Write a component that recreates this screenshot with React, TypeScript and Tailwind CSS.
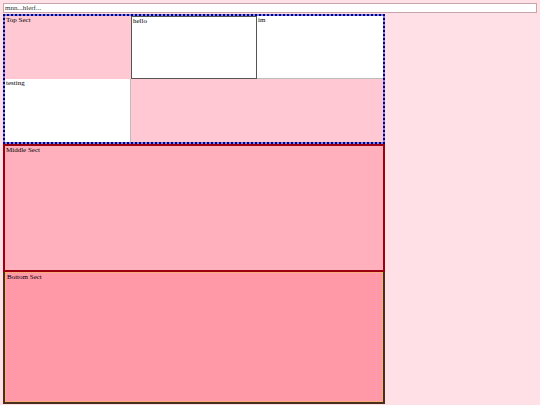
import React from "react";

export default function App() {
  return (
    <div className="min-h-[405px] w-[540px] bg-[#ffe0e6] pt-[3px] pl-[3px] font-['Liberation_Serif',serif] text-[7px] leading-[8px] text-black">
      <div className="flex h-[10px] w-[534px] items-center border border-[#c9a4aa] bg-white px-[1px] text-[7px] text-[#333]">
        mnn...hlerf...
      </div>
      <div className="mt-[1px] flex w-[382px] flex-col">
        <div className="h-[130px] border-2 border-dotted border-[#000080] bg-[#8080e0]">
          <div className="grid h-full grid-cols-3 grid-rows-2 bg-[#ffc8d2]">
            <div className="bg-[#ffc8d2] pl-[1px]">Top Sect</div>
            <div className="border border-[#555] bg-white pl-[1px]">hello</div>
            <div className="border-b border-[#bbb] bg-white pl-[1px]">im</div>
            <div className="border-r border-[#bbb] bg-white pl-[1px]">testing</div>
            <div className="col-span-2 bg-[#ffc8d2]"></div>
          </div>
        </div>
        <div className="h-[128px] border-2 border-[#9a0010] bg-[#ffb0bc] pl-[1px]">
          Middle Sect
        </div>
        <div className="h-[132px] border-l-2 border-r-2 border-b-2 border-[#4a2e1c]">
          <div className="h-full border border-dotted border-[#f5c050] bg-[#ff99a8] pl-[1px]">
            Bottom Sect
          </div>
        </div>
      </div>
    </div>
  );
}
